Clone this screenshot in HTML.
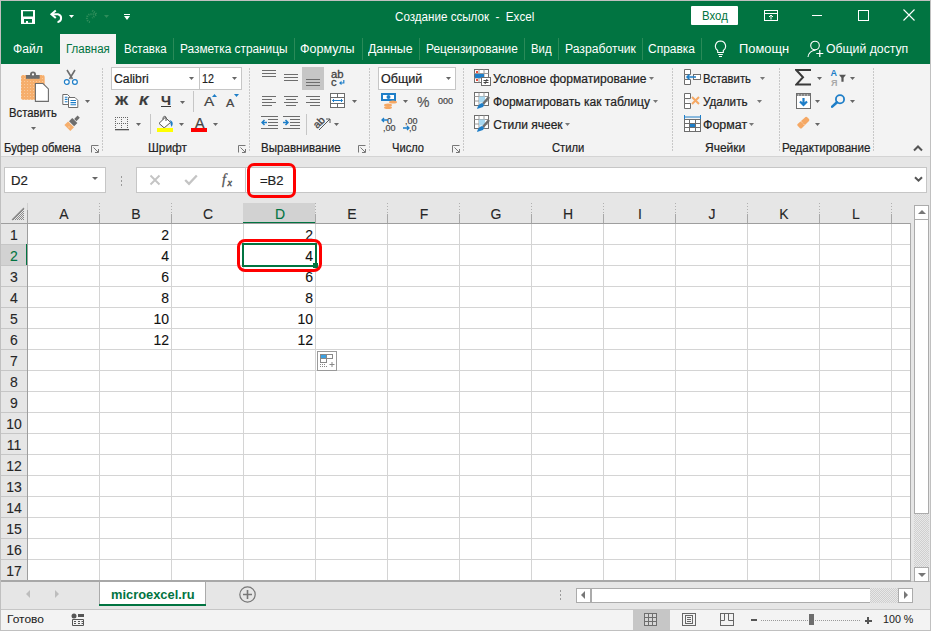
<!DOCTYPE html><html><head><meta charset='utf-8'><style>
*{margin:0;padding:0;box-sizing:border-box}
html,body{width:931px;height:631px;overflow:hidden}
body{position:relative;background:#f3f3f3;font-family:"Liberation Sans",sans-serif;color:#262626}
div,span,svg{position:absolute}
.t{white-space:nowrap;line-height:1;-webkit-text-stroke:0.2px currentColor}
.dd{width:0;height:0;border-left:3px solid transparent;border-right:3px solid transparent;border-top:3px solid #666}
</style></head><body><div style="left:0px;top:0px;width:931px;height:631px;background:#c0c0c0;"></div>
<div style="left:1px;top:1px;width:929px;height:63px;background:#017441;"></div>
<div style="left:1px;top:64px;width:929px;height:92px;background:#f3f3f3;"></div>
<div style="left:1px;top:156px;width:929px;height:1px;background:#d4d4d4;"></div>
<div style="left:1px;top:157px;width:929px;height:424px;background:#e6e6e6;"></div>
<span class="t" style="left:395px;top:9.9px;font-size:13px;color:#fff;transform-origin:0 0;transform:scaleX(0.894);-webkit-text-stroke:0;">Создание ссылок&nbsp; - &nbsp;Excel</span>
<div style="left:691px;top:6px;width:47px;height:19px;background:#fff;border-radius:1px"></div>
<span class="t" style="left:702px;top:9.5px;font-size:12px;color:#017441;transform-origin:0 0;transform:scaleX(0.950);-webkit-text-stroke:0;">Вход</span>
<div style="left:60px;top:34px;width:56px;height:30px;background:#f3f3f3;"></div>
<span class="t" style="left:13.4px;top:42.7px;font-size:12px;color:#fff;transform-origin:0 0;transform:scaleX(1.013);-webkit-text-stroke:0;">Файл</span>
<span class="t" style="left:66.10000000000001px;top:42.7px;font-size:12px;color:#017441;transform-origin:0 0;transform:scaleX(0.959);-webkit-text-stroke:0;">Главная</span>
<span class="t" style="left:123.7px;top:42.7px;font-size:12px;color:#fff;transform-origin:0 0;transform:scaleX(0.955);-webkit-text-stroke:0;">Вставка</span>
<span class="t" style="left:179.70000000000002px;top:42.7px;font-size:12px;color:#fff;transform-origin:0 0;transform:scaleX(0.988);-webkit-text-stroke:0;">Разметка страницы</span>
<span class="t" style="left:300.4px;top:42.7px;font-size:12px;color:#fff;transform-origin:0 0;transform:scaleX(1.044);-webkit-text-stroke:0;">Формулы</span>
<span class="t" style="left:368.29999999999995px;top:42.7px;font-size:12px;color:#fff;transform-origin:0 0;transform:scaleX(1.026);-webkit-text-stroke:0;">Данные</span>
<span class="t" style="left:425.9px;top:42.7px;font-size:12px;color:#fff;transform-origin:0 0;transform:scaleX(0.991);-webkit-text-stroke:0;">Рецензирование</span>
<span class="t" style="left:530.8px;top:42.7px;font-size:12px;color:#fff;transform-origin:0 0;transform:scaleX(0.944);-webkit-text-stroke:0;">Вид</span>
<span class="t" style="left:564.6px;top:42.7px;font-size:12px;color:#fff;transform-origin:0 0;transform:scaleX(1.013);-webkit-text-stroke:0;">Разработчик</span>
<span class="t" style="left:648.3px;top:42.7px;font-size:12px;color:#fff;transform-origin:0 0;transform:scaleX(0.998);-webkit-text-stroke:0;">Справка</span>
<span class="t" style="left:738.8px;top:42.7px;font-size:12px;color:#fff;transform-origin:0 0;transform:scaleX(1.074);-webkit-text-stroke:0;">Помощн</span>
<span class="t" style="left:826.4px;top:42.7px;font-size:12px;color:#fff;transform-origin:0 0;transform:scaleX(1.020);-webkit-text-stroke:0;">Общий доступ</span>
<div style="left:173px;top:38px;width:1px;height:22px;background:#2a8a58;"></div>
<div style="left:294px;top:38px;width:1px;height:22px;background:#2a8a58;"></div>
<div style="left:362px;top:38px;width:1px;height:22px;background:#2a8a58;"></div>
<div style="left:419px;top:38px;width:1px;height:22px;background:#2a8a58;"></div>
<div style="left:524px;top:38px;width:1px;height:22px;background:#2a8a58;"></div>
<div style="left:558px;top:38px;width:1px;height:22px;background:#2a8a58;"></div>
<div style="left:642px;top:38px;width:1px;height:22px;background:#2a8a58;"></div>
<div style="left:701px;top:38px;width:1px;height:22px;background:#2a8a58;"></div>
<svg style="left:21px;top:10px;" width="14" height="14" viewBox="0 0 14 14"><path fill="#fff" fill-rule="evenodd" d="M0 0 H14 V14 H0 Z M2 1.2 H12 V6.5 H2 Z M3 9 H11 V12.8 H7 V11 H5 V12.8 H3 Z"/></svg>
<svg style="left:49px;top:9px;" width="14" height="15" viewBox="0 0 14 15"><path d="M3 5.2 H9 A4 4 0 0 1 9 13 H8.5" fill="none" stroke="#fff" stroke-width="2"/><path d="M6.8 1.4 L2.4 5.2 L6.8 9" fill="none" stroke="#fff" stroke-width="2"/></svg>
<svg style="left:69px;top:15px" width="5.0" height="3" viewBox="0 0 5.0 3"><path d="M0 0 H5.0 L2.5 3 Z" fill="#fff"/></svg>
<svg style="left:84px;top:9px;" width="16" height="15" viewBox="0 0 16 15"><path d="M12 5.2 H6 A4 4 0 0 0 6 13 H6.5" fill="none" stroke="#2e8c5a" stroke-width="2" stroke-dasharray="1.2 1"/><path d="M8.2 1.4 L12.6 5.2 L8.2 9" fill="none" stroke="#2e8c5a" stroke-width="2" stroke-dasharray="1.2 1"/></svg>
<svg style="left:104px;top:15px" width="5.0" height="3" viewBox="0 0 5.0 3"><path d="M0 0 H5.0 L2.5 3 Z" fill="#2e8c5a"/></svg>
<div style="left:124px;top:14px;width:6px;height:1px;background:#fff;"></div>
<svg style="left:124px;top:16px" width="6" height="4" viewBox="0 0 6 4"><path d="M0 0 H6 L3.0 4 Z" fill="#fff"/></svg>
<svg style="left:764px;top:10px;" width="14" height="11" viewBox="0 0 14 11"><rect x="0.5" y="0.5" width="13" height="10" fill="none" stroke="#fff"/><path d="M1 3.5 H13" stroke="#fff"/><path d="M7 9.5 V5 M5 7 L7 5 L9 7" fill="none" stroke="#fff"/></svg>
<div style="left:812px;top:15px;width:10px;height:1px;background:#fff;"></div>
<svg style="left:858px;top:10px;" width="11" height="11" viewBox="0 0 11 11"><rect x="0.5" y="0.5" width="10" height="10" fill="none" stroke="#fff"/></svg>
<svg style="left:903px;top:9px;" width="12" height="12" viewBox="0 0 12 12"><path d="M0.5 0.5 L11.5 11.5 M11.5 0.5 L0.5 11.5" stroke="#fff" stroke-width="1.1"/></svg>
<svg style="left:713.5px;top:40px;" width="13" height="18" viewBox="0 0 13 18"><path d="M6.5 1 A5.2 5.2 0 0 1 9.3 10.5 V12.5 H3.7 V10.5 A5.2 5.2 0 0 1 6.5 1 Z" fill="none" stroke="#fff" stroke-width="1.1"/><path d="M4.2 14.5 H8.8 M5 16.5 H8" stroke="#fff" stroke-width="1.1"/></svg>
<svg style="left:807px;top:40px;" width="17" height="18" viewBox="0 0 17 18"><circle cx="8" cy="5.5" r="4.3" fill="none" stroke="#fff" stroke-width="1.1"/><path d="M1 17 A7.5 7.5 0 0 1 8.5 10.2" fill="none" stroke="#fff" stroke-width="1.1"/><path d="M12.8 10 V17 M9.3 13.5 H16.3" stroke="#fff" stroke-width="1.2"/></svg>
<div style="left:102px;top:68px;width:1px;height:84px;background:#c6c6c6;background:repeating-linear-gradient(#c8c8c8 0 2px,transparent 2px 3px)"></div>
<div style="left:249px;top:68px;width:1px;height:84px;background:#c6c6c6;background:repeating-linear-gradient(#c8c8c8 0 2px,transparent 2px 3px)"></div>
<div style="left:369px;top:68px;width:1px;height:84px;background:#c6c6c6;background:repeating-linear-gradient(#c8c8c8 0 2px,transparent 2px 3px)"></div>
<div style="left:463px;top:68px;width:1px;height:84px;background:#c6c6c6;background:repeating-linear-gradient(#c8c8c8 0 2px,transparent 2px 3px)"></div>
<div style="left:672px;top:68px;width:1px;height:84px;background:#c6c6c6;background:repeating-linear-gradient(#c8c8c8 0 2px,transparent 2px 3px)"></div>
<div style="left:779px;top:68px;width:1px;height:84px;background:#c6c6c6;background:repeating-linear-gradient(#c8c8c8 0 2px,transparent 2px 3px)"></div>
<div style="left:873px;top:68px;width:1px;height:84px;background:#c6c6c6;background:repeating-linear-gradient(#c8c8c8 0 2px,transparent 2px 3px)"></div>
<span class="t" style="left:3.8000000000000003px;top:142.1px;font-size:12px;color:#222;transform-origin:0 0;transform:scaleX(0.942);">Буфер обмена</span>
<span class="t" style="left:148.4px;top:142.1px;font-size:12px;color:#222;transform-origin:0 0;transform:scaleX(0.988);">Шрифт</span>
<span class="t" style="left:261.0px;top:142.1px;font-size:12px;color:#222;transform-origin:0 0;transform:scaleX(0.964);">Выравнивание</span>
<span class="t" style="left:391.59999999999997px;top:142.1px;font-size:12px;color:#222;transform-origin:0 0;transform:scaleX(0.927);">Число</span>
<span class="t" style="left:552.1999999999999px;top:142.1px;font-size:12px;color:#222;transform-origin:0 0;transform:scaleX(0.937);">Стили</span>
<span class="t" style="left:704.6999999999999px;top:142.1px;font-size:12px;color:#222;transform-origin:0 0;transform:scaleX(1.001);">Ячейки</span>
<span class="t" style="left:782.3px;top:142.1px;font-size:12px;color:#222;transform-origin:0 0;transform:scaleX(0.968);">Редактирование</span>
<svg style="left:91px;top:145px;" width="8" height="8" viewBox="0 0 8 8"><path d="M0.5 7.5 V0.5 H7.5" fill="none" stroke="#777"/><path d="M2.5 2.5 L7 7 M4 7.5 H7.5 V4" fill="none" stroke="#777"/></svg>
<svg style="left:238px;top:145px;" width="8" height="8" viewBox="0 0 8 8"><path d="M0.5 7.5 V0.5 H7.5" fill="none" stroke="#777"/><path d="M2.5 2.5 L7 7 M4 7.5 H7.5 V4" fill="none" stroke="#777"/></svg>
<svg style="left:358px;top:145px;" width="8" height="8" viewBox="0 0 8 8"><path d="M0.5 7.5 V0.5 H7.5" fill="none" stroke="#777"/><path d="M2.5 2.5 L7 7 M4 7.5 H7.5 V4" fill="none" stroke="#777"/></svg>
<svg style="left:452px;top:145px;" width="8" height="8" viewBox="0 0 8 8"><path d="M0.5 7.5 V0.5 H7.5" fill="none" stroke="#777"/><path d="M2.5 2.5 L7 7 M4 7.5 H7.5 V4" fill="none" stroke="#777"/></svg>
<svg style="left:913px;top:144px;" width="10" height="8" viewBox="0 0 10 8"><path d="M1 6.5 L5 2.5 L9 6.5" fill="none" stroke="#555" stroke-width="2"/></svg>
<svg style="left:20px;top:71px;" width="30" height="32" viewBox="0 0 30 32"><defs><pattern id="dotp" width="3" height="3" patternUnits="userSpaceOnUse"><rect width="3" height="3" fill="#f6ae6c"/><rect x="1" y="1" width="1" height="1" fill="#fbd9b5"/></pattern></defs><rect x="1" y="4" width="23.6" height="24.7" rx="2" fill="url(#dotp)"/><rect x="1" y="4" width="23.6" height="24.7" rx="2" fill="#f6ae6c" opacity="0.35"/><path d="M6 4 H19.7 V7.8 H6 Z" fill="#6d6d6d"/><circle cx="13" cy="3.4" r="3" fill="#6d6d6d"/><circle cx="13" cy="3.4" r="1.1" fill="#fff"/><path d="M15.4 12.5 H23 L28.4 17.9 V30.4 H15.4 Z" fill="#fff" stroke="#6d6d6d" stroke-width="1.1"/></svg>
<span class="t" style="left:9.4px;top:106.8px;font-size:12px;color:#222;transform-origin:0 0;transform:scaleX(0.940);">Вставить</span>
<svg style="left:31px;top:127px" width="5.0" height="3" viewBox="0 0 5.0 3"><path d="M0 0 H5.0 L2.5 3 Z" fill="#666"/></svg>
<svg style="left:63px;top:69px;" width="16" height="16" viewBox="0 0 16 16"><path d="M4 1 L9.5 10 M12 1 L6.5 10" stroke="#6d6d6d" stroke-width="1.6"/><circle cx="3.8" cy="13" r="2.4" fill="#fff" stroke="#1e7ec8" stroke-width="1.2"/><circle cx="11.9" cy="13" r="2.4" fill="#fff" stroke="#1e7ec8" stroke-width="1.2"/></svg>
<svg style="left:62px;top:94px;" width="17" height="15" viewBox="0 0 17 15"><path d="M0.8 0.5 H5.5 L7.5 2.5 V10.5 H0.8 Z" fill="#fff" stroke="#6d6d6d"/><path d="M6.5 3.5 H13 L15.8 6.3 V13.5 H6.5 Z" fill="#fff" stroke="#6d6d6d"/><path d="M2.8 3.2 H5.5 M2.8 5.4 H5.5 M2.8 7.8 H5.5 M8.5 6.5 H14 M8.5 8.6 H14 M8.5 10.8 H14" stroke="#1e7ec8" stroke-width="1.1"/></svg>
<svg style="left:85px;top:100px" width="5.0" height="3" viewBox="0 0 5.0 3"><path d="M0 0 H5.0 L2.5 3 Z" fill="#666"/></svg>
<svg style="left:58px;top:112px;" width="24" height="22" viewBox="0 0 24 22"><path d="M6.39 13.07 L10.07 9.39 L16.01 15.33 L12.33 19.01 Z" fill="#f6ae6c"/><path d="M11.03 9.28 L14.28 6.03 L19.37 11.12 L16.12 14.37 Z" fill="#6d6d6d"/><path d="M16.17 6.97 L19.57 3.57 L21.83 5.83 L18.43 9.23 Z" fill="#6d6d6d"/><rect x="10.5" y="14.5" width="1" height="1" fill="#fde3c8"/></svg>
<div style="left:111px;top:67px;width:89px;height:23px;background:#fff;border:1px solid #c6c6c6"></div>
<div style="left:199px;top:67px;width:43px;height:23px;background:#fff;border:1px solid #c6c6c6"></div>
<span class="t" style="left:114px;top:72.7px;font-size:12px;color:#222;transform-origin:0 0;transform:scaleX(1.020);">Calibri</span>
<span class="t" style="left:202.1px;top:72.7px;font-size:12px;color:#222;transform-origin:0 0;transform:scaleX(0.891);">12</span>
<svg style="left:189px;top:77px" width="5.0" height="3" viewBox="0 0 5.0 3"><path d="M0 0 H5.0 L2.5 3 Z" fill="#666"/></svg>
<svg style="left:232px;top:77px" width="5.0" height="3" viewBox="0 0 5.0 3"><path d="M0 0 H5.0 L2.5 3 Z" fill="#666"/></svg>
<span class="t" style="left:115px;top:94.2px;font-size:13px;color:#3a3a3a;transform-origin:0 0;transform:scaleX(1.123);font-weight:bold">Ж</span>
<span class="t" style="left:138.5px;top:94.2px;font-size:13px;color:#3a3a3a;transform-origin:0 0;transform:scaleX(1.175);font-weight:bold;font-style:italic">К</span>
<span class="t" style="left:161px;top:94.2px;font-size:13px;color:#3a3a3a;transform-origin:0 0;transform:scaleX(1.094);font-weight:bold">Ч</span>
<div style="left:161px;top:106px;width:10px;height:1.3px;background:#3a3a3a;"></div>
<svg style="left:179.5px;top:100.5px" width="5.0" height="3" viewBox="0 0 5.0 3"><path d="M0 0 H5.0 L2.5 3 Z" fill="#666"/></svg>
<div style="left:193px;top:91px;width:1px;height:21px;background:#c6c6c6;"></div>
<span class="t" style="left:203.6px;top:94.7px;font-size:13.5px;color:#444;transform-origin:0 0;transform:scaleX(1.131);">A</span>
<svg style="left:212px;top:94px" width="5.0" height="3" viewBox="0 0 5.0 3"><path d="M0 3 H5.0 L2.5 0 Z" fill="#1e7ec8"/></svg>
<span class="t" style="left:226.4px;top:97.5px;font-size:11px;color:#444;transform-origin:0 0;transform:scaleX(1.130);">A</span>
<svg style="left:234px;top:94px" width="5.0" height="3" viewBox="0 0 5.0 3"><path d="M0 0 H5.0 L2.5 3 Z" fill="#1e7ec8"/></svg>
<svg style="left:115px;top:117px;" width="14" height="14" viewBox="0 0 14 14"><g fill="#666"><rect x="0" y="0" width="1" height="1"/><rect x="0" y="6" width="1" height="1"/><rect x="2" y="0" width="1" height="1"/><rect x="2" y="6" width="1" height="1"/><rect x="4" y="0" width="1" height="1"/><rect x="4" y="6" width="1" height="1"/><rect x="6" y="0" width="1" height="1"/><rect x="6" y="6" width="1" height="1"/><rect x="8" y="0" width="1" height="1"/><rect x="8" y="6" width="1" height="1"/><rect x="10" y="0" width="1" height="1"/><rect x="10" y="6" width="1" height="1"/><rect x="12" y="0" width="1" height="1"/><rect x="12" y="6" width="1" height="1"/><rect x="0" y="0" width="1" height="1"/><rect x="6" y="0" width="1" height="1"/><rect x="12" y="0" width="1" height="1"/><rect x="0" y="2" width="1" height="1"/><rect x="6" y="2" width="1" height="1"/><rect x="12" y="2" width="1" height="1"/><rect x="0" y="4" width="1" height="1"/><rect x="6" y="4" width="1" height="1"/><rect x="12" y="4" width="1" height="1"/><rect x="0" y="6" width="1" height="1"/><rect x="6" y="6" width="1" height="1"/><rect x="12" y="6" width="1" height="1"/><rect x="0" y="8" width="1" height="1"/><rect x="6" y="8" width="1" height="1"/><rect x="12" y="8" width="1" height="1"/><rect x="0" y="10" width="1" height="1"/><rect x="6" y="10" width="1" height="1"/><rect x="12" y="10" width="1" height="1"/></g><rect x="0" y="12" width="14" height="1.3" fill="#555"/></svg>
<svg style="left:136px;top:123px" width="5.0" height="3" viewBox="0 0 5.0 3"><path d="M0 0 H5.0 L2.5 3 Z" fill="#666"/></svg>
<div style="left:150px;top:114px;width:1px;height:20px;background:#c6c6c6;"></div>
<svg style="left:157px;top:115px;" width="18" height="13" viewBox="0 0 18 13"><path d="M2 8.4 L8.2 2.4 L13.6 7.4 L7.2 12.9 Z" fill="#fff" stroke="#555" stroke-width="1"/><path d="M6 4.5 V2.5 A2 2 0 0 1 9 2 L9 6" fill="none" stroke="#555" stroke-width="1"/><path d="M13 5 Q16.5 6.5 15.5 10 L14.5 12 Q13 9 13.5 7 Z" fill="#1e7ec8"/></svg>
<div style="left:157px;top:128px;width:16px;height:4px;background:#ffff00;"></div>
<svg style="left:179px;top:123px" width="5.0" height="3" viewBox="0 0 5.0 3"><path d="M0 0 H5.0 L2.5 3 Z" fill="#666"/></svg>
<span class="t" style="left:194.6px;top:116.3px;font-size:14px;color:#444;transform-origin:0 0;transform:scaleX(1.017);">A</span>
<div style="left:191px;top:128px;width:16px;height:4px;background:#ff0000;"></div>
<svg style="left:213px;top:123px" width="5.0" height="3" viewBox="0 0 5.0 3"><path d="M0 0 H5.0 L2.5 3 Z" fill="#666"/></svg>
<div style="left:262px;top:70px;width:14px;height:1px;background:#6d6d6d;"></div>
<div style="left:262px;top:73px;width:14px;height:1px;background:#6d6d6d;"></div>
<div style="left:262px;top:76px;width:14px;height:1px;background:#6d6d6d;"></div>
<div style="left:284px;top:74px;width:14px;height:1px;background:#6d6d6d;"></div>
<div style="left:284px;top:77px;width:14px;height:1px;background:#6d6d6d;"></div>
<div style="left:284px;top:80px;width:14px;height:1px;background:#6d6d6d;"></div>
<div style="left:302px;top:67px;width:22px;height:23px;background:#c6c6c6;"></div>
<div style="left:306px;top:79px;width:14px;height:1px;background:#6d6d6d;"></div>
<div style="left:306px;top:82px;width:14px;height:1px;background:#6d6d6d;"></div>
<div style="left:306px;top:85px;width:14px;height:1px;background:#6d6d6d;"></div>
<span class="t" style="left:331px;top:69.3px;font-size:11px;color:#444;transform-origin:0 0;transform:scaleX(1.029);-webkit-text-stroke:0.3px currentColor">ab</span>
<span class="t" style="left:331.3px;top:76.5px;font-size:11px;color:#444;transform-origin:0 0;transform:scaleX(1.018);-webkit-text-stroke:0.3px currentColor">c</span>
<svg style="left:339px;top:80px;" width="6" height="5" viewBox="0 0 6 5"><path d="M4.8 0 V3 H1.2" fill="none" stroke="#1e7ec8" stroke-width="1.2"/><path d="M0 3 L2.5 0.8 V5.2 Z" fill="#1e7ec8"/></svg>
<div style="left:262px;top:96px;width:14px;height:1px;background:#6d6d6d;"></div>
<div style="left:262px;top:99px;width:10px;height:1px;background:#6d6d6d;"></div>
<div style="left:262px;top:102px;width:14px;height:1px;background:#6d6d6d;"></div>
<div style="left:262px;top:105px;width:10px;height:1px;background:#6d6d6d;"></div>
<div style="left:284px;top:96px;width:14px;height:1px;background:#6d6d6d;"></div>
<div style="left:286px;top:99px;width:10px;height:1px;background:#6d6d6d;"></div>
<div style="left:284px;top:102px;width:14px;height:1px;background:#6d6d6d;"></div>
<div style="left:286px;top:105px;width:10px;height:1px;background:#6d6d6d;"></div>
<div style="left:306px;top:96px;width:14px;height:1px;background:#6d6d6d;"></div>
<div style="left:310px;top:99px;width:10px;height:1px;background:#6d6d6d;"></div>
<div style="left:306px;top:102px;width:14px;height:1px;background:#6d6d6d;"></div>
<div style="left:310px;top:105px;width:10px;height:1px;background:#6d6d6d;"></div>
<svg style="left:330px;top:93px;" width="15" height="15" viewBox="0 0 15 15"><rect x="0.5" y="0.5" width="14" height="14" fill="#fff" stroke="#6d6d6d"/><path d="M0.5 4.5 H14.5 M0.5 10.5 H14.5 M7.5 0.5 V4.5 M7.5 10.5 V14.5" stroke="#6d6d6d"/><path d="M2.5 7.5 H12.5 M4 6 L2.5 7.5 L4 9 M11 6 L12.5 7.5 L11 9" fill="none" stroke="#1e7ec8"/></svg>
<svg style="left:352px;top:100px" width="5.0" height="3" viewBox="0 0 5.0 3"><path d="M0 0 H5.0 L2.5 3 Z" fill="#666"/></svg>
<svg style="left:261px;top:116px;" width="17" height="14" viewBox="0 0 17 14"><path d="M0 0.5 H17 M7 3.5 H17 M7 6.5 H17 M7 9.5 H17 M0 12.5 H17" stroke="#6d6d6d"/><path d="M6 6.5 H1 M3.5 4 L1 6.5 L3.5 9" fill="none" stroke="#1e7ec8" stroke-width="1.5"/></svg>
<svg style="left:283px;top:116px;" width="17" height="14" viewBox="0 0 17 14"><path d="M0 0.5 H17 M7 3.5 H17 M7 6.5 H17 M7 9.5 H17 M0 12.5 H17" stroke="#6d6d6d"/><path d="M0 6.5 H5 M2.5 4 L5 6.5 L2.5 9" fill="none" stroke="#1e7ec8" stroke-width="1.5"/></svg>
<div style="left:306px;top:114px;width:1px;height:21px;background:#c6c6c6;"></div>
<span class="t" style="left:313px;top:117px;font-size:10.5px;color:#444;transform:rotate(-45deg);transform-origin:50% 50%;-webkit-text-stroke:0.3px currentColor">ab</span>
<svg style="left:318px;top:118px;" width="14" height="13" viewBox="0 0 14 13"><path d="M1 12 L12 1 M8 1 H12 V5" fill="none" stroke="#555"/></svg>
<svg style="left:334px;top:123px" width="5.0" height="3" viewBox="0 0 5.0 3"><path d="M0 0 H5.0 L2.5 3 Z" fill="#666"/></svg>
<div style="left:378px;top:67px;width:78px;height:23px;background:#fff;border:1px solid #c6c6c6"></div>
<span class="t" style="left:380.8px;top:72.5px;font-size:12px;color:#222;transform-origin:0 0;transform:scaleX(1.046);">Общий</span>
<svg style="left:446px;top:77px" width="5.0" height="3" viewBox="0 0 5.0 3"><path d="M0 0 H5.0 L2.5 3 Z" fill="#666"/></svg>
<svg style="left:381px;top:93px;" width="17" height="16" viewBox="0 0 17 16"><rect x="0" y="0" width="15" height="8" fill="#1e7ec8"/><rect x="2" y="2" width="11" height="4" fill="#fff"/><circle cx="7.5" cy="4" r="2" fill="#1e7ec8"/><ellipse cx="12" cy="9" rx="4" ry="1.6" fill="#f5a864"/><ellipse cx="7" cy="12" rx="4" ry="1.6" fill="#f5a864"/><ellipse cx="7" cy="14.5" rx="4" ry="1.6" fill="#f5a864"/></svg>
<svg style="left:403px;top:100px" width="5.0" height="3" viewBox="0 0 5.0 3"><path d="M0 0 H5.0 L2.5 3 Z" fill="#666"/></svg>
<span class="t" style="left:417px;top:95px;font-size:14px;color:#555;">%</span>
<span class="t" style="left:438px;top:97px;font-size:9px;color:#444;">000</span>
<span class="t" style="left:387px;top:117px;font-size:9px;color:#444;">0</span>
<span class="t" style="left:383px;top:124px;font-size:9px;color:#444;">,00</span>
<svg style="left:381px;top:117px;" width="7" height="6" viewBox="0 0 7 6"><path d="M7 3 H1 M3 1 L1 3 L3 5" fill="none" stroke="#1e7ec8" stroke-width="1.3"/></svg>
<span class="t" style="left:405px;top:117px;font-size:9px;color:#444;">,00</span>
<span class="t" style="left:409px;top:124px;font-size:9px;color:#444;">,0</span>
<svg style="left:403px;top:125px;" width="7" height="6" viewBox="0 0 7 6"><path d="M0 3 H6 M4 1 L6 3 L4 5" fill="none" stroke="#1e7ec8" stroke-width="1.3"/></svg>
<svg style="left:474px;top:69px;" width="17" height="17" viewBox="0 0 17 17"><rect x="0.5" y="0.5" width="14" height="13" fill="#fff" stroke="#6d6d6d"/><path d="M0.5 4.5 H14.5 M0.5 9 H14.5 M5 0.5 V13.5 M10 0.5 V13.5" stroke="#9a9a9a"/><rect x="1" y="5" width="9" height="4" fill="#1e7ec8"/><rect x="2" y="2" width="2" height="2" fill="#e84c3d"/><rect x="2" y="10" width="2" height="2" fill="#e84c3d"/><rect x="7.5" y="8.5" width="9" height="8" fill="#fff" stroke="#6d6d6d"/><path d="M9.5 11.5 H14.5 M9.5 13.5 H14.5 M13 10 L11 15" stroke="#444"/></svg>
<svg style="left:474px;top:92px;" width="17" height="17" viewBox="0 0 17 17"><rect x="0.5" y="0.5" width="14" height="13" fill="#fff" stroke="#6d6d6d"/><path d="M0.5 4.5 H14.5 M0.5 9 H14.5 M5 0.5 V13.5 M10 0.5 V13.5" stroke="#9a9a9a"/><rect x="5" y="4.5" width="6" height="6" fill="#a8d8f0"/><path d="M15 5 L9 12" stroke="#6d6d6d" stroke-width="2.5"/><path d="M3 17 Q4 12 8 11 Q11 12 9 15 Z" fill="#1e7ec8"/></svg>
<svg style="left:474px;top:115px;" width="17" height="17" viewBox="0 0 17 17"><rect x="0.5" y="0.5" width="14" height="13" fill="#fff" stroke="#6d6d6d"/><path d="M0.5 4.5 H14.5 M0.5 9 H14.5 M5 0.5 V13.5 M10 0.5 V13.5" stroke="#9a9a9a"/><rect x="5" y="4.5" width="6" height="6" fill="#a8d8f0"/><path d="M15 5 L9 12" stroke="#6d6d6d" stroke-width="2.5"/><path d="M3 17 Q4 12 8 11 Q11 12 9 15 Z" fill="#1e7ec8"/></svg>
<span class="t" style="left:493.3px;top:73.1px;font-size:12px;color:#222;transform-origin:0 0;transform:scaleX(1.006);">Условное форматирование</span>
<svg style="left:649px;top:77px" width="5.0" height="3" viewBox="0 0 5.0 3"><path d="M0 0 H5.0 L2.5 3 Z" fill="#777"/></svg>
<span class="t" style="left:493.3px;top:96.1px;font-size:12px;color:#222;transform-origin:0 0;transform:scaleX(1.006);">Форматировать как таблицу</span>
<svg style="left:653px;top:100px" width="5.0" height="3" viewBox="0 0 5.0 3"><path d="M0 0 H5.0 L2.5 3 Z" fill="#777"/></svg>
<span class="t" style="left:493.3px;top:119.1px;font-size:12px;color:#222;transform-origin:0 0;transform:scaleX(1.000);">Стили ячеек</span>
<svg style="left:565px;top:123px" width="5.0" height="3" viewBox="0 0 5.0 3"><path d="M0 0 H5.0 L2.5 3 Z" fill="#777"/></svg>
<svg style="left:684px;top:69px;" width="17" height="17" viewBox="0 0 17 17"><path d="M0.5 0.5 H6.5 V5.5 H0.5 Z M0.5 10.5 H6.5 V15.5 H0.5 Z M0.5 5.5 V10.5" fill="#fff" stroke="#6d6d6d"/><rect x="9.5" y="5.5" width="7" height="5" fill="#fff" stroke="#6d6d6d"/><path d="M12 8 H3 M5.5 5.5 L3 8 L5.5 10.5" fill="none" stroke="#1e7ec8" stroke-width="1.5"/></svg>
<svg style="left:684px;top:93px;" width="17" height="16" viewBox="0 0 17 16"><path d="M0.5 0.5 H6.5 V5.5 H0.5 Z M0.5 10.5 H6.5 V15.5 H0.5 Z M0.5 5.5 V10.5 H6.5" fill="#fff" stroke="#6d6d6d"/><path d="M8 4 L15 11 M15 4 L8 11" stroke="#f5a864" stroke-width="2"/></svg>
<svg style="left:684px;top:115px;" width="17" height="17" viewBox="0 0 17 17"><path d="M0.5 2 H16.5 M0.5 0 V4 M16.5 0 V4" stroke="#1e7ec8"/><rect x="0.5" y="4.5" width="16" height="12" fill="#fff" stroke="#6d6d6d"/><path d="M0.5 8.5 H16.5 M0.5 12.5 H16.5 M5.5 4.5 V16.5 M11.5 4.5 V16.5" stroke="#6d6d6d"/><rect x="6" y="9" width="5" height="3" fill="#1e7ec8"/></svg>
<span class="t" style="left:703px;top:73.1px;font-size:12px;color:#222;transform-origin:0 0;transform:scaleX(0.943);">Вставить</span>
<svg style="left:760px;top:77px" width="5.0" height="3" viewBox="0 0 5.0 3"><path d="M0 0 H5.0 L2.5 3 Z" fill="#777"/></svg>
<span class="t" style="left:703px;top:96.1px;font-size:12px;color:#222;transform-origin:0 0;transform:scaleX(0.973);">Удалить</span>
<svg style="left:757px;top:100px" width="5.0" height="3" viewBox="0 0 5.0 3"><path d="M0 0 H5.0 L2.5 3 Z" fill="#777"/></svg>
<span class="t" style="left:703px;top:119.1px;font-size:12px;color:#222;transform-origin:0 0;transform:scaleX(1.034);">Формат</span>
<svg style="left:749px;top:123px" width="5.0" height="3" viewBox="0 0 5.0 3"><path d="M0 0 H5.0 L2.5 3 Z" fill="#777"/></svg>
<svg style="left:795px;top:69px;" width="16" height="17" viewBox="0 0 16 17"><path d="M15 2 V1 H1.2 L8 8.3 L1.2 15.6 H15 V14.6" fill="none" stroke="#3a3a3a" stroke-width="2" stroke-linejoin="miter"/></svg>
<svg style="left:817px;top:77px" width="5.0" height="3" viewBox="0 0 5.0 3"><path d="M0 0 H5.0 L2.5 3 Z" fill="#666"/></svg>
<svg style="left:830px;top:69px;" width="18" height="18" viewBox="0 0 18 18"><text x="0.5" y="7.3" font-size="9" font-family="Liberation Sans" fill="#1e7ec8" font-weight="bold">A</text><text x="1" y="16.7" font-size="9" font-family="Liberation Sans" fill="#a8a8a8" font-weight="bold">Я</text><path d="M9 5.8 H16 L13.6 8.8 V12.7 H11.4 V8.8 Z" fill="#555"/></svg>
<svg style="left:850px;top:77px" width="5.0" height="3" viewBox="0 0 5.0 3"><path d="M0 0 H5.0 L2.5 3 Z" fill="#666"/></svg>
<svg style="left:796px;top:93px;" width="15" height="16" viewBox="0 0 15 16"><rect x="0.5" y="0.5" width="14" height="15" fill="#fff" stroke="#6d6d6d"/><rect x="1" y="1" width="13" height="2" fill="#888"/><path d="M2 2 H3 M5 2 H6 M8 2 H9 M11 2 H12" stroke="#ddd"/><path d="M7.5 5 V12 M4 8.5 L7.5 12 L11 8.5" fill="none" stroke="#1e7ec8" stroke-width="2.2"/></svg>
<svg style="left:815px;top:100px" width="5.0" height="3" viewBox="0 0 5.0 3"><path d="M0 0 H5.0 L2.5 3 Z" fill="#666"/></svg>
<svg style="left:831px;top:94px;" width="15" height="14" viewBox="0 0 15 14"><circle cx="9" cy="5.2" r="4.1" fill="none" stroke="#1e7ec8" stroke-width="1.8"/><path d="M6 8.3 L1.2 12.6" stroke="#1e7ec8" stroke-width="2.6" stroke-linecap="round"/></svg>
<svg style="left:850px;top:100px" width="5.0" height="3" viewBox="0 0 5.0 3"><path d="M0 0 H5.0 L2.5 3 Z" fill="#666"/></svg>
<svg style="left:796px;top:116px;" width="14" height="14" viewBox="0 0 14 14"><path d="M9.5 1 Q10.5 0.5 11.5 1.5 L13 3 Q13.8 4 13 5 L6 12 Q5 13 4 12.2 L1.6 9.8 Q0.8 8.8 1.6 8 Z" fill="#f5a864"/><path d="M4.5 5 L9 9.5" stroke="#fff" stroke-width="0.8" stroke-dasharray="1 1.2"/></svg>
<svg style="left:815px;top:123px" width="5.0" height="3" viewBox="0 0 5.0 3"><path d="M0 0 H5.0 L2.5 3 Z" fill="#666"/></svg>
<div style="left:4px;top:167px;width:102px;height:26px;background:#fff;border:1px solid #c6c6c6"></div>
<span class="t" style="left:10.9px;top:173.9px;font-size:13px;color:#222;transform-origin:0 0;transform:scaleX(1.017);">D2</span>
<svg style="left:92px;top:177px" width="6" height="3" viewBox="0 0 6 3"><path d="M0 0 H6 L3.0 3 Z" fill="#666"/></svg>
<div style="left:121px;top:176px;width:1px;height:2px;background:#9a9a9a;"></div>
<div style="left:121px;top:180px;width:1px;height:2px;background:#9a9a9a;"></div>
<div style="left:121px;top:184px;width:1px;height:2px;background:#9a9a9a;"></div>
<div style="left:136px;top:167px;width:110px;height:26px;background:#fff;border:1px solid #c6c6c6"></div>
<svg style="left:149px;top:174px;" width="12" height="12" viewBox="0 0 12 12"><path d="M1.5 1.5 L10.5 10.5 M10.5 1.5 L1.5 10.5" stroke="#c4c4c4" stroke-width="1.9"/></svg>
<svg style="left:184px;top:174px;" width="14" height="12" viewBox="0 0 14 12"><path d="M1.2 6 L5 9.8 L12.8 1.5" fill="none" stroke="#c4c4c4" stroke-width="2.3"/></svg>
<span class="t" style="left:222px;top:172.5px;font-size:14px;color:#555;font-style:italic;font-family:'Liberation Serif';-webkit-text-stroke:0.3px currentColor">f</span>
<span class="t" style="left:227.5px;top:177.5px;font-size:10px;color:#555;font-style:italic;font-family:'Liberation Serif';-webkit-text-stroke:0.4px currentColor">x</span>
<div style="left:245px;top:167px;width:682px;height:26px;background:#fff;border:1px solid #c6c6c6"></div>
<span class="t" style="left:260.3px;top:174.1px;font-size:13px;color:#222;transform-origin:0 0;transform:scaleX(1.004);">=B2</span>
<svg style="left:914px;top:176px;" width="9" height="7" viewBox="0 0 9 7"><path d="M1 1.2 L4.5 4.7 L8 1.2" fill="none" stroke="#555" stroke-width="2"/></svg>
<div style="left:247px;top:163px;width:49px;height:35px;background:transparent;border:3px solid #f00;border-radius:7px"></div>
<div style="left:913px;top:203px;width:17px;height:378px;background:#e6e6e6;"></div>
<div style="left:914px;top:205px;width:15px;height:15px;background:#fff;border:1px solid #ababab"></div>
<svg style="left:917.5px;top:210px" width="8" height="4" viewBox="0 0 8 4"><path d="M0 4 H8 L4.0 0 Z" fill="#777"/></svg>
<div style="left:914px;top:219px;width:15px;height:295px;background:#fff;border:1px solid #ababab"></div>
<div style="left:914px;top:514px;width:15px;height:53px;background:#dcdcdc;background:repeating-conic-gradient(#cfcfcf 0 25%,#e8e8e8 0 50%) 0 0/2px 2px"></div>
<div style="left:914px;top:567px;width:15px;height:15px;background:#fff;border:1px solid #ababab"></div>
<svg style="left:917.5px;top:572.5px" width="8" height="4" viewBox="0 0 8 4"><path d="M0 0 H8 L4.0 4 Z" fill="#777"/></svg>
<div style="left:1px;top:203px;width:910px;height:20px;background:#e6e6e6;"></div>
<div style="left:1px;top:223px;width:26px;height:358px;background:#e6e6e6;"></div>
<div style="left:28px;top:224px;width:883px;height:357px;background:#fff;"></div>
<div style="left:27px;top:224px;width:1px;height:357px;background:#d4d4d4;"></div>
<div style="left:99px;top:224px;width:1px;height:357px;background:#d4d4d4;"></div>
<div style="left:99px;top:214px;width:1px;height:9px;background:#a8a8a8;"></div>
<div style="left:99px;top:203px;width:1px;height:11px;background:#c8c8c8;background:repeating-linear-gradient(#b0b0b0 0 1px,#e6e6e6 1px 3px)"></div>
<div style="left:171px;top:224px;width:1px;height:357px;background:#d4d4d4;"></div>
<div style="left:171px;top:214px;width:1px;height:9px;background:#a8a8a8;"></div>
<div style="left:171px;top:203px;width:1px;height:11px;background:#c8c8c8;background:repeating-linear-gradient(#b0b0b0 0 1px,#e6e6e6 1px 3px)"></div>
<div style="left:243px;top:224px;width:1px;height:357px;background:#d4d4d4;"></div>
<div style="left:243px;top:214px;width:1px;height:9px;background:#a8a8a8;"></div>
<div style="left:243px;top:203px;width:1px;height:11px;background:#c8c8c8;background:repeating-linear-gradient(#b0b0b0 0 1px,#e6e6e6 1px 3px)"></div>
<div style="left:315px;top:224px;width:1px;height:357px;background:#d4d4d4;"></div>
<div style="left:315px;top:214px;width:1px;height:9px;background:#a8a8a8;"></div>
<div style="left:315px;top:203px;width:1px;height:11px;background:#c8c8c8;background:repeating-linear-gradient(#b0b0b0 0 1px,#e6e6e6 1px 3px)"></div>
<div style="left:387px;top:224px;width:1px;height:357px;background:#d4d4d4;"></div>
<div style="left:387px;top:214px;width:1px;height:9px;background:#a8a8a8;"></div>
<div style="left:387px;top:203px;width:1px;height:11px;background:#c8c8c8;background:repeating-linear-gradient(#b0b0b0 0 1px,#e6e6e6 1px 3px)"></div>
<div style="left:459px;top:224px;width:1px;height:357px;background:#d4d4d4;"></div>
<div style="left:459px;top:214px;width:1px;height:9px;background:#a8a8a8;"></div>
<div style="left:459px;top:203px;width:1px;height:11px;background:#c8c8c8;background:repeating-linear-gradient(#b0b0b0 0 1px,#e6e6e6 1px 3px)"></div>
<div style="left:531px;top:224px;width:1px;height:357px;background:#d4d4d4;"></div>
<div style="left:531px;top:214px;width:1px;height:9px;background:#a8a8a8;"></div>
<div style="left:531px;top:203px;width:1px;height:11px;background:#c8c8c8;background:repeating-linear-gradient(#b0b0b0 0 1px,#e6e6e6 1px 3px)"></div>
<div style="left:603px;top:224px;width:1px;height:357px;background:#d4d4d4;"></div>
<div style="left:603px;top:214px;width:1px;height:9px;background:#a8a8a8;"></div>
<div style="left:603px;top:203px;width:1px;height:11px;background:#c8c8c8;background:repeating-linear-gradient(#b0b0b0 0 1px,#e6e6e6 1px 3px)"></div>
<div style="left:675px;top:224px;width:1px;height:357px;background:#d4d4d4;"></div>
<div style="left:675px;top:214px;width:1px;height:9px;background:#a8a8a8;"></div>
<div style="left:675px;top:203px;width:1px;height:11px;background:#c8c8c8;background:repeating-linear-gradient(#b0b0b0 0 1px,#e6e6e6 1px 3px)"></div>
<div style="left:747px;top:224px;width:1px;height:357px;background:#d4d4d4;"></div>
<div style="left:747px;top:214px;width:1px;height:9px;background:#a8a8a8;"></div>
<div style="left:747px;top:203px;width:1px;height:11px;background:#c8c8c8;background:repeating-linear-gradient(#b0b0b0 0 1px,#e6e6e6 1px 3px)"></div>
<div style="left:819px;top:224px;width:1px;height:357px;background:#d4d4d4;"></div>
<div style="left:819px;top:214px;width:1px;height:9px;background:#a8a8a8;"></div>
<div style="left:819px;top:203px;width:1px;height:11px;background:#c8c8c8;background:repeating-linear-gradient(#b0b0b0 0 1px,#e6e6e6 1px 3px)"></div>
<div style="left:891px;top:224px;width:1px;height:357px;background:#d4d4d4;"></div>
<div style="left:891px;top:214px;width:1px;height:9px;background:#a8a8a8;"></div>
<div style="left:891px;top:203px;width:1px;height:11px;background:#c8c8c8;background:repeating-linear-gradient(#b0b0b0 0 1px,#e6e6e6 1px 3px)"></div>
<div style="left:28px;top:244px;width:883px;height:1px;background:#d4d4d4;"></div>
<div style="left:1px;top:244px;width:26px;height:1px;background:#c6c6c6;"></div>
<div style="left:28px;top:265px;width:883px;height:1px;background:#d4d4d4;"></div>
<div style="left:1px;top:265px;width:26px;height:1px;background:#c6c6c6;"></div>
<div style="left:28px;top:286px;width:883px;height:1px;background:#d4d4d4;"></div>
<div style="left:1px;top:286px;width:26px;height:1px;background:#c6c6c6;"></div>
<div style="left:28px;top:307px;width:883px;height:1px;background:#d4d4d4;"></div>
<div style="left:1px;top:307px;width:26px;height:1px;background:#c6c6c6;"></div>
<div style="left:28px;top:328px;width:883px;height:1px;background:#d4d4d4;"></div>
<div style="left:1px;top:328px;width:26px;height:1px;background:#c6c6c6;"></div>
<div style="left:28px;top:349px;width:883px;height:1px;background:#d4d4d4;"></div>
<div style="left:1px;top:349px;width:26px;height:1px;background:#c6c6c6;"></div>
<div style="left:28px;top:370px;width:883px;height:1px;background:#d4d4d4;"></div>
<div style="left:1px;top:370px;width:26px;height:1px;background:#c6c6c6;"></div>
<div style="left:28px;top:391px;width:883px;height:1px;background:#d4d4d4;"></div>
<div style="left:1px;top:391px;width:26px;height:1px;background:#c6c6c6;"></div>
<div style="left:28px;top:412px;width:883px;height:1px;background:#d4d4d4;"></div>
<div style="left:1px;top:412px;width:26px;height:1px;background:#c6c6c6;"></div>
<div style="left:28px;top:433px;width:883px;height:1px;background:#d4d4d4;"></div>
<div style="left:1px;top:433px;width:26px;height:1px;background:#c6c6c6;"></div>
<div style="left:28px;top:454px;width:883px;height:1px;background:#d4d4d4;"></div>
<div style="left:1px;top:454px;width:26px;height:1px;background:#c6c6c6;"></div>
<div style="left:28px;top:475px;width:883px;height:1px;background:#d4d4d4;"></div>
<div style="left:1px;top:475px;width:26px;height:1px;background:#c6c6c6;"></div>
<div style="left:28px;top:496px;width:883px;height:1px;background:#d4d4d4;"></div>
<div style="left:1px;top:496px;width:26px;height:1px;background:#c6c6c6;"></div>
<div style="left:28px;top:517px;width:883px;height:1px;background:#d4d4d4;"></div>
<div style="left:1px;top:517px;width:26px;height:1px;background:#c6c6c6;"></div>
<div style="left:28px;top:538px;width:883px;height:1px;background:#d4d4d4;"></div>
<div style="left:1px;top:538px;width:26px;height:1px;background:#c6c6c6;"></div>
<div style="left:28px;top:559px;width:883px;height:1px;background:#d4d4d4;"></div>
<div style="left:1px;top:559px;width:26px;height:1px;background:#c6c6c6;"></div>
<div style="left:28px;top:580px;width:883px;height:1px;background:#d4d4d4;"></div>
<div style="left:1px;top:580px;width:26px;height:1px;background:#c6c6c6;"></div>
<div style="left:1px;top:245px;width:26px;height:20px;background:#d2d2d2;"></div>
<div style="left:26px;top:244px;width:2px;height:21px;background:#017441;"></div>
<div style="left:243px;top:203px;width:72px;height:19px;background:#d2d2d2;"></div>
<div style="left:243px;top:222px;width:72px;height:2px;background:#017441;"></div>
<div style="left:1px;top:223px;width:910px;height:1px;background:#9e9e9e;"></div>
<div style="left:27px;top:210px;width:1px;height:371px;background:#9e9e9e;"></div>
<div style="left:27px;top:203px;width:1px;height:7px;background:#d0d0d0;"></div>
<div style="left:910px;top:223px;width:1px;height:358px;background:#ababab;"></div>
<div style="left:1px;top:580px;width:910px;height:2px;background:#a8a8a8;"></div>
<svg style="left:11px;top:207px;" width="14" height="14" viewBox="0 0 14 14"><defs><pattern id="chk" width="2" height="2" patternUnits="userSpaceOnUse"><rect width="1" height="1" fill="#8a8a8a"/><rect x="1" y="1" width="1" height="1" fill="#8a8a8a"/></pattern></defs><path d="M1 13 L13 1 L13 13 Z" fill="url(#chk)"/><path d="M1 13 L13 1" stroke="#8a8a8a" stroke-width="1.2"/></svg>
<span class="t" style="left:28px;top:207.1px;font-size:14px;color:#262626;width:72px;text-align:center;-webkit-text-stroke:0.1px currentColor">A</span>
<span class="t" style="left:100px;top:207.1px;font-size:14px;color:#262626;width:72px;text-align:center;-webkit-text-stroke:0.1px currentColor">B</span>
<span class="t" style="left:172px;top:207.1px;font-size:14px;color:#262626;width:72px;text-align:center;-webkit-text-stroke:0.1px currentColor">C</span>
<span class="t" style="left:244px;top:207.1px;font-size:14px;color:#017441;-webkit-text-stroke:0;width:72px;text-align:center;-webkit-text-stroke:0.1px currentColor">D</span>
<span class="t" style="left:316px;top:207.1px;font-size:14px;color:#262626;width:72px;text-align:center;-webkit-text-stroke:0.1px currentColor">E</span>
<span class="t" style="left:388px;top:207.1px;font-size:14px;color:#262626;width:72px;text-align:center;-webkit-text-stroke:0.1px currentColor">F</span>
<span class="t" style="left:460px;top:207.1px;font-size:14px;color:#262626;width:72px;text-align:center;-webkit-text-stroke:0.1px currentColor">G</span>
<span class="t" style="left:532px;top:207.1px;font-size:14px;color:#262626;width:72px;text-align:center;-webkit-text-stroke:0.1px currentColor">H</span>
<span class="t" style="left:604px;top:207.1px;font-size:14px;color:#262626;width:72px;text-align:center;-webkit-text-stroke:0.1px currentColor">I</span>
<span class="t" style="left:676px;top:207.1px;font-size:14px;color:#262626;width:72px;text-align:center;-webkit-text-stroke:0.1px currentColor">J</span>
<span class="t" style="left:748px;top:207.1px;font-size:14px;color:#262626;width:72px;text-align:center;-webkit-text-stroke:0.1px currentColor">K</span>
<span class="t" style="left:820px;top:207.1px;font-size:14px;color:#262626;width:72px;text-align:center;-webkit-text-stroke:0.1px currentColor">L</span>
<span class="t" style="left:0.5px;top:228px;font-size:14px;color:#262626;width:27px;text-align:center;-webkit-text-stroke:0.1px currentColor">1</span>
<span class="t" style="left:0.5px;top:249px;font-size:14px;color:#017441;-webkit-text-stroke:0;width:27px;text-align:center;-webkit-text-stroke:0.1px currentColor">2</span>
<span class="t" style="left:0.5px;top:270px;font-size:14px;color:#262626;width:27px;text-align:center;-webkit-text-stroke:0.1px currentColor">3</span>
<span class="t" style="left:0.5px;top:291px;font-size:14px;color:#262626;width:27px;text-align:center;-webkit-text-stroke:0.1px currentColor">4</span>
<span class="t" style="left:0.5px;top:312px;font-size:14px;color:#262626;width:27px;text-align:center;-webkit-text-stroke:0.1px currentColor">5</span>
<span class="t" style="left:0.5px;top:333px;font-size:14px;color:#262626;width:27px;text-align:center;-webkit-text-stroke:0.1px currentColor">6</span>
<span class="t" style="left:0.5px;top:354px;font-size:14px;color:#262626;width:27px;text-align:center;-webkit-text-stroke:0.1px currentColor">7</span>
<span class="t" style="left:0.5px;top:375px;font-size:14px;color:#262626;width:27px;text-align:center;-webkit-text-stroke:0.1px currentColor">8</span>
<span class="t" style="left:0.5px;top:396px;font-size:14px;color:#262626;width:27px;text-align:center;-webkit-text-stroke:0.1px currentColor">9</span>
<span class="t" style="left:0.5px;top:417px;font-size:14px;color:#262626;width:27px;text-align:center;-webkit-text-stroke:0.1px currentColor">10</span>
<span class="t" style="left:0.5px;top:438px;font-size:14px;color:#262626;width:27px;text-align:center;-webkit-text-stroke:0.1px currentColor">11</span>
<span class="t" style="left:0.5px;top:459px;font-size:14px;color:#262626;width:27px;text-align:center;-webkit-text-stroke:0.1px currentColor">12</span>
<span class="t" style="left:0.5px;top:480px;font-size:14px;color:#262626;width:27px;text-align:center;-webkit-text-stroke:0.1px currentColor">13</span>
<span class="t" style="left:0.5px;top:501px;font-size:14px;color:#262626;width:27px;text-align:center;-webkit-text-stroke:0.1px currentColor">14</span>
<span class="t" style="left:0.5px;top:522px;font-size:14px;color:#262626;width:27px;text-align:center;-webkit-text-stroke:0.1px currentColor">15</span>
<span class="t" style="left:0.5px;top:543px;font-size:14px;color:#262626;width:27px;text-align:center;-webkit-text-stroke:0.1px currentColor">16</span>
<span class="t" style="left:0.5px;top:564px;font-size:14px;color:#262626;width:27px;text-align:center;-webkit-text-stroke:0.1px currentColor">17</span>
<span class="t" style="left:99px;top:228.1px;font-size:14px;color:#111;width:70px;text-align:right;-webkit-text-stroke:0.1px currentColor">2</span>
<span class="t" style="left:243px;top:228.1px;font-size:14px;color:#111;width:70px;text-align:right;-webkit-text-stroke:0.1px currentColor">2</span>
<span class="t" style="left:99px;top:249.1px;font-size:14px;color:#111;width:70px;text-align:right;-webkit-text-stroke:0.1px currentColor">4</span>
<span class="t" style="left:243px;top:249.1px;font-size:14px;color:#111;width:70px;text-align:right;-webkit-text-stroke:0.1px currentColor">4</span>
<span class="t" style="left:99px;top:270.1px;font-size:14px;color:#111;width:70px;text-align:right;-webkit-text-stroke:0.1px currentColor">6</span>
<span class="t" style="left:243px;top:270.1px;font-size:14px;color:#111;width:70px;text-align:right;-webkit-text-stroke:0.1px currentColor">6</span>
<span class="t" style="left:99px;top:291.1px;font-size:14px;color:#111;width:70px;text-align:right;-webkit-text-stroke:0.1px currentColor">8</span>
<span class="t" style="left:243px;top:291.1px;font-size:14px;color:#111;width:70px;text-align:right;-webkit-text-stroke:0.1px currentColor">8</span>
<span class="t" style="left:99px;top:312.1px;font-size:14px;color:#111;width:70px;text-align:right;-webkit-text-stroke:0.1px currentColor">10</span>
<span class="t" style="left:243px;top:312.1px;font-size:14px;color:#111;width:70px;text-align:right;-webkit-text-stroke:0.1px currentColor">10</span>
<span class="t" style="left:99px;top:333.1px;font-size:14px;color:#111;width:70px;text-align:right;-webkit-text-stroke:0.1px currentColor">12</span>
<span class="t" style="left:243px;top:333.1px;font-size:14px;color:#111;width:70px;text-align:right;-webkit-text-stroke:0.1px currentColor">12</span>
<div style="left:242px;top:243px;width:75px;height:24px;background:transparent;border:2px solid #017441"></div>
<div style="left:313px;top:263px;width:5px;height:5px;background:#017441;"></div>
<div style="left:237px;top:239px;width:85px;height:33px;background:transparent;border:3px solid #f00;border-radius:8px"></div>
<svg style="left:317px;top:351px;" width="20" height="20" viewBox="0 0 20 20"><rect x="0.5" y="0.5" width="19" height="19" fill="#fff" stroke="#9a9a9a"/><rect x="3.5" y="3.5" width="6" height="4" fill="#3ca0e0" stroke="#888"/><rect x="9.5" y="3.5" width="6" height="4" fill="#fff" stroke="#888"/><rect x="3.5" y="7.5" width="6" height="4" fill="#fff" stroke="#888"/><path d="M3 13.5 H4 M5 13.5 H6 M7 13.5 H8 M3 15.5 H4 M5 15.5 H6 M7 15.5 H8 M9 15.5 H10" stroke="#888"/><path d="M15 11 V16 M12.5 13.5 H17.5" stroke="#888"/></svg>
<div style="left:1px;top:582px;width:929px;height:27px;background:#e6e6e6;"></div>
<div style="left:1px;top:609px;width:929px;height:1px;background:#c6c6c6;"></div>
<div style="left:26px;top:590px;width:0;height:0;border-top:4.5px solid transparent;border-bottom:4.5px solid transparent;border-right:4.5px solid #bdbdbd"></div>
<div style="left:55px;top:590px;width:0;height:0;border-top:4.5px solid transparent;border-bottom:4.5px solid transparent;border-left:4.5px solid #bdbdbd"></div>
<div style="left:99px;top:582px;width:107px;height:23px;background:#fff;border-left:1px solid #ababab;border-right:1px solid #ababab"></div>
<div style="left:99px;top:604px;width:107px;height:2px;background:#017441;"></div>
<span class="t" style="left:110.8px;top:588px;font-size:13px;color:#017441;transform-origin:0 0;transform:scaleX(0.990);-webkit-text-stroke:0;font-weight:bold">microexcel.ru</span>
<svg style="left:239px;top:586px;" width="17" height="17" viewBox="0 0 17 17"><circle cx="8.5" cy="8.5" r="7.7" fill="none" stroke="#777" stroke-width="1.2"/><path d="M8.5 4 V13 M4 8.5 H13" stroke="#777" stroke-width="1.6"/></svg>
<div style="left:560px;top:590px;width:1px;height:2px;background:#9a9a9a;"></div>
<div style="left:560px;top:594px;width:1px;height:2px;background:#9a9a9a;"></div>
<div style="left:560px;top:598px;width:1px;height:2px;background:#9a9a9a;"></div>
<div style="left:576px;top:588px;width:15px;height:15px;background:#fff;border:1px solid #ababab"></div>
<div style="left:581px;top:591px;width:0;height:0;border-top:4.5px solid transparent;border-bottom:4.5px solid transparent;border-right:4.5px solid #777"></div>
<div style="left:590px;top:588px;width:281px;height:15px;background:#fff;border:1px solid #ababab;border-left-width:2px"></div>
<div style="left:870px;top:588px;width:28px;height:15px;background:#dcdcdc;background:repeating-conic-gradient(#cfcfcf 0 25%,#e8e8e8 0 50%) 0 0/2px 2px"></div>
<div style="left:898px;top:588px;width:15px;height:15px;background:#fff;border:1px solid #ababab"></div>
<div style="left:904px;top:591px;width:0;height:0;border-top:4.5px solid transparent;border-bottom:4.5px solid transparent;border-left:4.5px solid #777"></div>
<div style="left:1px;top:610px;width:929px;height:20px;background:#f3f3f3;"></div>
<span class="t" style="left:6.9px;top:613.7px;font-size:11px;color:#222;transform-origin:0 0;transform:scaleX(1.086);-webkit-text-stroke:0.05px currentColor">Готово</span>
<svg style="left:71px;top:613px;" width="14" height="13" viewBox="0 0 14 13"><circle cx="3" cy="3" r="2.5" fill="#555"/><rect x="7" y="1" width="6" height="3" fill="#555"/><path d="M1.5 6.5 H12.5 V12.5 H1.5 Z" fill="none" stroke="#555"/><path d="M3 8.5 H5 M7 8.5 H9 M10.5 8.5 H12 M3 10.5 H5 M7 10.5 H9 M10.5 10.5 H12" stroke="#555"/></svg>
<div style="left:632.5px;top:610px;width:37.5px;height:20px;background:#c6c6c6;"></div>
<svg style="left:644px;top:613px;" width="13" height="13" viewBox="0 0 13 13"><rect x="0" y="0" width="13" height="13" fill="#d6d6d6"/><path d="M0.5 0 V13 M4.5 0 V13 M8.5 0 V13 M12.5 0 V13 M0 0.5 H13 M0 4.5 H13 M0 8.5 H13 M0 12.5 H13" stroke="#6d6d6d" stroke-width="1"/></svg>
<svg style="left:682px;top:613px;" width="14" height="13" viewBox="0 0 14 13"><rect x="0.5" y="0.5" width="13" height="12" fill="none" stroke="#666"/><rect x="3.5" y="2.5" width="7" height="8" fill="none" stroke="#666"/><path d="M5 4.5 H9 M5 6.5 H9 M5 8.5 H9" stroke="#666"/></svg>
<svg style="left:720px;top:613px;" width="14" height="13" viewBox="0 0 14 13"><rect x="0.5" y="0.5" width="13" height="12" fill="none" stroke="#666"/><path d="M4.5 0.5 V7.5 M8.5 0.5 V7.5 H13.5 M0.5 7.5 H4.5" fill="none" stroke="#666"/></svg>
<div style="left:751px;top:619px;width:6px;height:2px;background:#555;"></div>
<div style="left:761px;top:620px;width:100px;height:1px;background:transparent;background:repeating-linear-gradient(90deg,#999 0 1px,transparent 1px 2px)"></div>
<div style="left:809px;top:614px;width:5px;height:11px;background:#6d6d6d;"></div>
<div style="left:865px;top:620px;width:7px;height:2px;background:#555;"></div>
<div style="left:867px;top:617px;width:2px;height:7px;background:#555;"></div>
<span class="t" style="left:883.1px;top:613.7px;font-size:11px;color:#222;transform-origin:0 0;transform:scaleX(0.974);-webkit-text-stroke:0.05px currentColor">100 %</span></body></html>
